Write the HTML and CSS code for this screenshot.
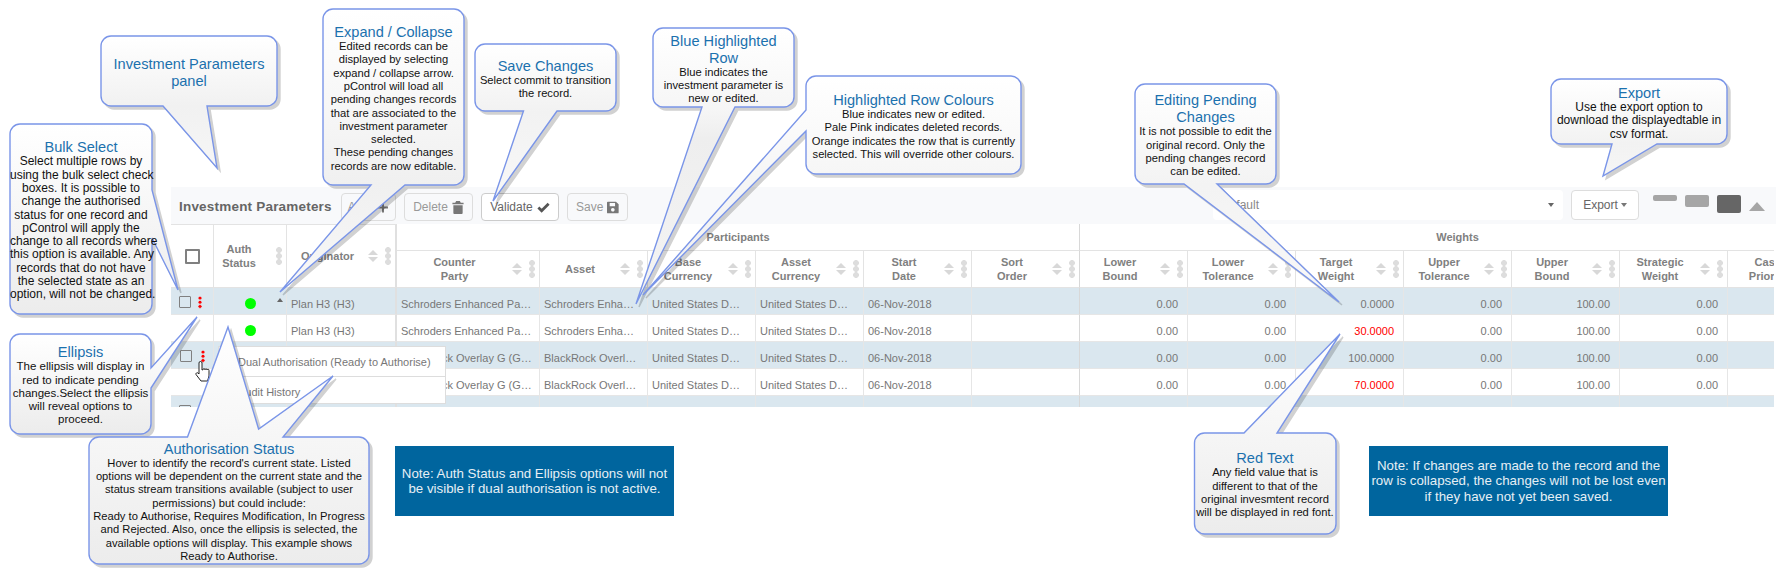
FILE: index.html
```html
<!DOCTYPE html>
<html>
<head>
    <meta charset="UTF-8">
    <title>Investment Parameters</title>
    <link rel="stylesheet" href="styles.css">
</head>
<body>
<div class="stage">

    <!-- the panel from the app -->
    <div class="panel">
        <div class="toolbar">
            <span class="panel-title">Investment Parameters</span>
            <button class="btn btn-off btn-add" type="button">Add <svg class="ico" viewBox="0 0 12 12"><path d="M5 1h2v4h4v2H7v4H5V7H1V5h4z"/></svg></button>
            <button class="btn btn-off" type="button">Delete <svg class="ico" viewBox="0 0 12 14"><path d="M4 0h4l1 2h3v1.500H0V2h3zM1 4.500h10V13a1 1 0 0 1-1 1H2a1 1 0 0 1-1-1z"/></svg></button>
            <button class="btn" type="button">Validate <svg class="ico ico-wide" viewBox="0 0 14 12"><path d="M1.500 6l3.500 3.500 7.500-7.500" fill="none" stroke="#555" stroke-width="3"/></svg></button>
            <button class="btn btn-off" type="button">Save <svg class="ico" viewBox="0 0 13 13"><path fill-rule="evenodd" d="M1 0h9l3 3v9a1 1 0 0 1-1 1H1a1 1 0 0 1-1-1V1a1 1 0 0 1 1-1zM3 1.500V5h6V1.500zM6.500 7a2 2 0 1 0 .01 0z"/></svg></button>
            <div class="view-select"><span>Default</span><i class="caret"></i></div>
            <button class="btn btn-export" type="button">Export <i class="caret caret-small"></i></button>
            <div class="density">
                <i class="den den-s"></i>
                <i class="den den-m"></i>
                <i class="den den-l"></i>
                <i class="collapse-arrow"></i>
            </div>
        </div>

        <div class="table-wrap">
            <table class="grid">
                <colgroup>
                    <col class="col-chk"><col class="col-auth"><col class="col-orig"><col class="col-party">
                    <col class="col-std"><col class="col-std"><col class="col-std"><col class="col-std"><col class="col-std">
                    <col class="col-std"><col class="col-std"><col class="col-std"><col class="col-std"><col class="col-std"><col class="col-std"><col class="col-std">
                </colgroup>
                <thead>
                    <tr class="group-row">
                        <th rowspan="2" class="frozen"><i class="check check-big"></i></th>
                        <th rowspan="2" class="frozen"><div class="th"><span class="th-label th-label-auth">Auth<br>Status</span><i class="dots"></i></div></th>
                        <th rowspan="2" class="frozen frozen-end"><div class="th"><span class="th-label">Originator</span><i class="sort"></i><i class="dots"></i></div></th>
                        <th colspan="6" class="group">Participants</th>
                        <th colspan="7" class="group">Weights</th>
                    </tr>
                    <tr class="head-row">
                        <th><div class="th"><span class="th-label">Counter<br>Party</span><i class="sort"></i><i class="dots"></i></div></th>
                        <th><div class="th"><span class="th-label">Asset</span><i class="sort"></i><i class="dots"></i></div></th>
                        <th><div class="th"><span class="th-label">Base<br>Currency</span><i class="sort"></i><i class="dots"></i></div></th>
                        <th><div class="th"><span class="th-label">Asset<br>Currency</span><i class="sort"></i><i class="dots"></i></div></th>
                        <th><div class="th"><span class="th-label">Start<br>Date</span><i class="sort"></i><i class="dots"></i></div></th>
                        <th class="group-end"><div class="th"><span class="th-label">Sort<br>Order</span><i class="sort"></i><i class="dots"></i></div></th>
                        <th><div class="th"><span class="th-label">Lower<br>Bound</span><i class="sort"></i><i class="dots"></i></div></th>
                        <th><div class="th"><span class="th-label">Lower<br>Tolerance</span><i class="sort"></i><i class="dots"></i></div></th>
                        <th><div class="th"><span class="th-label">Target<br>Weight</span><i class="sort"></i><i class="dots"></i></div></th>
                        <th><div class="th"><span class="th-label">Upper<br>Tolerance</span><i class="sort"></i><i class="dots"></i></div></th>
                        <th><div class="th"><span class="th-label">Upper<br>Bound</span><i class="sort"></i><i class="dots"></i></div></th>
                        <th><div class="th"><span class="th-label">Strategic<br>Weight</span><i class="sort"></i><i class="dots"></i></div></th>
                        <th><div class="th"><span class="th-label">Cash<br>Priority</span><i class="sort"></i><i class="dots"></i></div></th>
                    </tr>
                </thead>
                <tbody>
                    <tr class="blue">
                        <td><div class="row-tools"><i class="check"></i><i class="kebab"></i></div></td>
                        <td class="auth"><i class="status"></i><i class="row-arrow"></i></td>
                        <td class="frozen-end">Plan H3 (H3)</td>
                        <td>Schroders Enhanced Participation</td>
                        <td class="tight">Schroders Enhanced Participation</td>
                        <td class="tight">United States Dollar (USD)</td>
                        <td class="tight">United States Dollar (USD)</td>
                        <td>06-Nov-2018</td>
                        <td class="group-end"></td>
                        <td class="num">0.00</td><td class="num">0.00</td><td class="num">0.0000</td><td class="num">0.00</td><td class="num">100.00</td><td class="num">0.00</td><td></td>
                    </tr>
                    <tr>
                        <td></td>
                        <td class="auth"><i class="status"></i></td>
                        <td class="frozen-end">Plan H3 (H3)</td>
                        <td>Schroders Enhanced Participation</td>
                        <td class="tight">Schroders Enhanced Participation</td>
                        <td class="tight">United States Dollar (USD)</td>
                        <td class="tight">United States Dollar (USD)</td>
                        <td>06-Nov-2018</td>
                        <td class="group-end"></td>
                        <td class="num">0.00</td><td class="num">0.00</td><td class="num changed">30.0000</td><td class="num">0.00</td><td class="num">100.00</td><td class="num">0.00</td><td></td>
                    </tr>
                    <tr class="blue">
                        <td><div class="row-tools row-tools-hover"><i class="check"></i><i class="kebab"></i></div></td>
                        <td class="auth"></td>
                        <td class="frozen-end"></td>
                        <td>BlackRock Overlay G (GBP Hedged)</td>
                        <td>BlackRock Overlay G (GBP Hedged)</td>
                        <td class="tight">United States Dollar (USD)</td>
                        <td class="tight">United States Dollar (USD)</td>
                        <td>06-Nov-2018</td>
                        <td class="group-end"></td>
                        <td class="num">0.00</td><td class="num">0.00</td><td class="num">100.0000</td><td class="num">0.00</td><td class="num">100.00</td><td class="num">0.00</td><td></td>
                    </tr>
                    <tr>
                        <td></td>
                        <td class="auth"></td>
                        <td class="frozen-end"></td>
                        <td>BlackRock Overlay G (GBP Hedged)</td>
                        <td>BlackRock Overlay G (GBP Hedged)</td>
                        <td class="tight">United States Dollar (USD)</td>
                        <td class="tight">United States Dollar (USD)</td>
                        <td>06-Nov-2018</td>
                        <td class="group-end"></td>
                        <td class="num">0.00</td><td class="num">0.00</td><td class="num changed">70.0000</td><td class="num">0.00</td><td class="num">100.00</td><td class="num">0.00</td><td></td>
                    </tr>
                    <tr class="blue">
                        <td><div class="row-tools"><i class="check"></i></div></td>
                        <td></td><td class="frozen-end"></td><td></td><td></td><td></td><td></td><td></td><td class="group-end"></td>
                        <td></td><td></td><td></td><td></td><td></td><td></td><td></td>
                    </tr>
                </tbody>
            </table>
        </div>
    </div>

    <!-- ellipsis menu + pointer -->
    <div class="menu">
        <div class="menu-item">Dual Authorisation (Ready to Authorise)</div>
        <div class="menu-item">Audit History</div>
    </div>
    <svg class="hand" viewBox="0 0 18 22"><path d="M4 2a1.500 1.500 0 0 1 3 0v7l1-.3a1 1 0 0 1 2 0 1 1 0 0 1 2 .3 1 1 0 0 1 2 .5V15l-1.500 5H6L1 13.500a1.300 1.300 0 0 1 2-1.500L4 13Z" fill="#fff" stroke="#222" stroke-width="1"/></svg>

    <!-- callout shapes, drawn over the table -->
    <svg class="shapes" viewBox="0 0 1786 578">
        <defs>
            <linearGradient id="gPanel" gradientUnits="userSpaceOnUse" x1="0" y1="36" x2="0" y2="168"><stop offset="0" stop-color="#fff"/><stop offset=".53" stop-color="#f1f1f1"/><stop offset="1" stop-color="#f6f6f6"/></linearGradient>
            <linearGradient id="gBulk" gradientUnits="userSpaceOnUse" x1="0" y1="124" x2="0" y2="314"><stop offset="0" stop-color="#fff"/><stop offset="1" stop-color="#ececec"/></linearGradient>
            <linearGradient id="gExpand" gradientUnits="userSpaceOnUse" x1="0" y1="9" x2="0" y2="292"><stop offset="0" stop-color="#fff"/><stop offset=".62" stop-color="#f0f0f0"/><stop offset="1" stop-color="#f8f8f8"/></linearGradient>
            <linearGradient id="gSave" gradientUnits="userSpaceOnUse" x1="0" y1="44" x2="0" y2="202"><stop offset="0" stop-color="#fff"/><stop offset=".43" stop-color="#f2f2f2"/><stop offset="1" stop-color="#f8f8f8"/></linearGradient>
            <linearGradient id="gBlue" gradientUnits="userSpaceOnUse" x1="0" y1="28" x2="0" y2="304"><stop offset="0" stop-color="#fff"/><stop offset=".29" stop-color="#f6f6f6"/><stop offset=".4" stop-color="#eee"/><stop offset="1" stop-color="#f4f4f4"/></linearGradient>
            <linearGradient id="gColours" gradientUnits="userSpaceOnUse" x1="0" y1="76" x2="0" y2="295"><stop offset="0" stop-color="#fff"/><stop offset=".45" stop-color="#f6f6f6"/><stop offset="1" stop-color="#f0f0f0"/></linearGradient>
            <linearGradient id="gEdit" gradientUnits="userSpaceOnUse" x1="0" y1="84" x2="0" y2="302"><stop offset="0" stop-color="#fff"/><stop offset=".46" stop-color="#f3f3f3"/><stop offset="1" stop-color="#f8f8f8"/></linearGradient>
            <linearGradient id="gExport" gradientUnits="userSpaceOnUse" x1="0" y1="79" x2="0" y2="176"><stop offset="0" stop-color="#fff"/><stop offset=".67" stop-color="#f2f2f2"/><stop offset="1" stop-color="#f6f6f6"/></linearGradient>
            <linearGradient id="gEllipsis" gradientUnits="userSpaceOnUse" x1="0" y1="334" x2="0" y2="434"><stop offset="0" stop-color="#fff"/><stop offset="1" stop-color="#ececec"/></linearGradient>
            <linearGradient id="gAuth" gradientUnits="userSpaceOnUse" x1="0" y1="327" x2="0" y2="564"><stop offset="0" stop-color="#fff"/><stop offset="1" stop-color="#ececec"/></linearGradient>
            <linearGradient id="gRed" gradientUnits="userSpaceOnUse" x1="0" y1="334" x2="0" y2="534"><stop offset="0" stop-color="#fff"/><stop offset="1" stop-color="#ececec"/></linearGradient>
        </defs>
        <path class="bubble" fill="url(#gPanel)" d="M111 36H267A10 10 0 0 1 277 46V96A10 10 0 0 1 267 106H207L217 168L163 106H111A10 10 0 0 1 101 96V46A10 10 0 0 1 111 36Z"/>
        <path class="bubble" fill="url(#gBulk)" d="M20 124H142A10 10 0 0 1 152 134V190L178 290L152 238V304A10 10 0 0 1 142 314H20A10 10 0 0 1 10 304V134A10 10 0 0 1 20 124Z"/>
        <path class="bubble" fill="url(#gExpand)" d="M333 9H454A10 10 0 0 1 464 19V175A10 10 0 0 1 454 185H405L280 292L371 185H333A10 10 0 0 1 323 175V19A10 10 0 0 1 333 9Z"/>
        <path class="bubble" fill="url(#gSave)" d="M485 44H606A10 10 0 0 1 616 54V101A10 10 0 0 1 606 111H557L493 201L523.500 111H485A10 10 0 0 1 475 101V54A10 10 0 0 1 485 44Z"/>
        <path class="bubble" fill="url(#gBlue)" d="M663 28H784A10 10 0 0 1 794 38V97A10 10 0 0 1 784 107H735L636 304L702 107H663A10 10 0 0 1 653 97V38A10 10 0 0 1 663 28Z"/>
        <path class="bubble" fill="url(#gColours)" d="M816 76H1011A10 10 0 0 1 1021 86V164A10 10 0 0 1 1011 174H816A10 10 0 0 1 806 164V131L643 295L806 110V86A10 10 0 0 1 816 76Z"/>
        <path class="bubble" fill="url(#gEdit)" d="M1145 84H1266A10 10 0 0 1 1276 94V174A10 10 0 0 1 1266 184H1217L1339 302L1184 184H1145A10 10 0 0 1 1135 174V94A10 10 0 0 1 1145 84Z"/>
        <path class="bubble" fill="url(#gExport)" d="M1561 79H1717A10 10 0 0 1 1727 89V134A10 10 0 0 1 1717 144H1657L1603 176L1612 144H1561A10 10 0 0 1 1551 134V89A10 10 0 0 1 1561 79Z"/>
        <path class="bubble" fill="url(#gEllipsis)" d="M20 334H141A10 10 0 0 1 151 344V368L197 317L151 388V424A10 10 0 0 1 141 434H20A10 10 0 0 1 10 424V344A10 10 0 0 1 20 334Z"/>
        <path class="bubble" fill="url(#gAuth)" d="M99 437H187.500L228 327L258.600 429L333 376L283 437H359A10 10 0 0 1 369 447V554A10 10 0 0 1 359 564H99A10 10 0 0 1 89 554V447A10 10 0 0 1 99 437Z"/>
        <path class="bubble" fill="url(#gRed)" d="M1204.500 433H1244L1340 334L1277 433H1326A10 10 0 0 1 1336 443V524A10 10 0 0 1 1326 534H1204.500A10 10 0 0 1 1194.500 524V443A10 10 0 0 1 1204.500 433Z"/>
    </svg>

    <!-- callout text -->
    <div class="note c-panel"><h3>Investment Parameters<br>panel</h3></div>
    <div class="note c-bulk"><h3>Bulk Select</h3><p>Select multiple rows by<br>using the bulk select check<br>boxes. It is possible to<br>change the authorised<br>status for one record and<br>pControl will apply the<br>change to all records where<br>this option is available. Any<br>records that do not have<br>the selected state as an<br>option, will not be changed.</p></div>
    <div class="note c-expand"><h3>Expand / Collapse</h3><p>Edited records can be<br>displayed by selecting<br>expand / collapse arrow.<br>pControl will load all<br>pending changes records<br>that are associated to the<br>investment parameter<br>selected.<br>These pending changes<br>records are now editable.</p></div>
    <div class="note c-save"><h3>Save Changes</h3><p>Select commit to transition<br>the record.</p></div>
    <div class="note c-blue"><h3>Blue Highlighted<br>Row</h3><p>Blue indicates the<br>investment parameter is<br>new or edited.</p></div>
    <div class="note c-colours"><h3>Highlighted Row Colours</h3><p>Blue indicates new or edited.<br>Pale Pink indicates deleted records.<br>Orange indicates the row that is currently<br>selected. This will override other colours.</p></div>
    <div class="note c-edit"><h3>Editing Pending<br>Changes</h3><p>It is not possible to edit the<br>original record. Only the<br>pending changes record<br>can be edited.</p></div>
    <div class="note c-export"><h3>Export</h3><p>Use the export option to<br>download the displayedtable in<br>csv format.</p></div>
    <div class="note c-ellipsis"><h3>Ellipsis</h3><p>The ellipsis will display in<br>red to indicate pending<br>changes.Select the ellipsis<br>will reveal options to<br>proceed.</p></div>
    <div class="note c-auth"><h3>Authorisation Status</h3><p>Hover to identify the record's current state. Listed<br>options will be dependent on the current state and the<br>status stream transitions available (subject to user<br>permissions) but could include:<br>Ready to Authorise, Requires Modification, In Progress<br>and Rejected. Also, once the ellipsis is selected, the<br>available options will display. This example shows<br>Ready to Authorise.</p></div>
    <div class="note c-red"><h3>Red Text</h3><p>Any field value that is<br>different to that of the<br>original invesmtent record<br>will be displayed in red font.</p></div>

    <div class="banner banner-auth">Note: Auth Status and Ellipsis options will not<br>be visible if dual authorisation is not active.</div>
    <div class="banner banner-save">Note: If changes are made to the record and the<br>row is collapsed, the changes will not be lost even<br>if they have not yet been saved.</div>
</div>
</body>
</html>
```

FILE: styles.css
```css
* {
    box-sizing: border-box;
}

body {
    margin: 0;
    background-color: #fff;
    font-family: "Liberation Sans", Arial, sans-serif;
}

.stage {
    position: relative;
    width: 1786px;
    height: 578px;
    overflow: hidden;
    padding: 187px 10px 0 171px;
}

/* toolbar */
.toolbar {
    display: flex;
    align-items: center;
    height: 37px;
    padding: 0 11px 0 8px;
    background-color: #f8f9fb;
}

.panel-title {
    width: 154px;
    font-size: 13.5px;
    font-weight: bold;
    color: #666;
    letter-spacing: .2px;
    margin-right: 8px;
    white-space: nowrap;
    position: relative;
    top: 1px;
}

.btn {
    display: flex;
    align-items: center;
    justify-content: center;
    gap: 4px;
    height: 28px;
    margin: 3px 8px 0 0;
    padding: 0 8px;
    background-color: #fff;
    border: 1px solid #ccc;
    border-radius: 4px;
    color: #666;
    font-family: "Liberation Sans", Arial, sans-serif;
    font-size: 12px;
}

.btn-off {
    background-color: transparent;
    border-color: #ddd;
    color: #999;
}

.btn-add { gap: 8px; padding: 0; }
.btn-off:nth-of-type(1) { width: 55px; }
.btn-off:nth-of-type(2) { width: 69px; }
.btn:nth-of-type(3) { width: 78px; }
.btn-off:nth-of-type(4) { width: 61px; }

.ico {
    width: 12px;
    height: 13px;
    fill: #777;
}

.ico-wide {
    width: 13px;
}

.view-select {
    display: flex;
    align-items: center;
    justify-content: space-between;
    width: 350px;
    height: 30px;
    margin: -2px 8px 0 auto;
    padding: 0 9px 0 8px;
    background-color: #fff;
    border-radius: 4px;
    font-size: 12px;
    color: #888;
}

.caret {
    width: 0;
    height: 0;
    border-left: 3.5px solid transparent;
    border-right: 3.5px solid transparent;
    border-top: 4px solid #666;
}

.caret-small {
    border-top-color: #777;
}

.btn-export {
    width: 68px;
    height: 30px;
    margin: -2px 14px 0 0;
    padding: 0;
    gap: 3px;
    border-color: #ddd;
}

.density {
    display: flex;
    align-items: flex-start;
    align-self: flex-start;
    gap: 8px;
    margin-top: 8px;
}

.den {
    width: 24px;
    border-radius: 2px;
    background-color: #a6a6a6;
}

.den-s { height: 6px; }
.den-m { height: 12px; }
.den-l { height: 18px; background-color: #666; }

.collapse-arrow {
    width: 0;
    height: 0;
    margin-top: 7px;
    border-left: 8.5px solid transparent;
    border-right: 8.5px solid transparent;
    border-bottom: 9px solid #a6a6a6;
}

/* table */
.table-wrap {
    width: 1603px;
    height: 183px;
    overflow: hidden;
}

.grid {
    width: 1665px;
    table-layout: fixed;
    border-collapse: separate;
    border-spacing: 0;
    font-size: 11px;
    color: #777;
}

.col-chk { width: 43px; }
.col-auth { width: 73px; }
.col-orig { width: 110px; }
.col-party { width: 143px; }
.col-std { width: 108px; }

.grid th {
    padding: 0;
    border-right: 1px solid #e3e3e3;
    border-bottom: 1px solid #e3e3e3;
    font-size: 11px;
    font-weight: bold;
    line-height: 14px;
    color: #808080;
}

.group-row { height: 27px; }
.head-row { height: 37px; }

.grid th.frozen {
    border-top: 1px solid #e3e3e3;
}

.grid th.frozen-end,
.grid td.frozen-end {
    border-right: 2px solid #e0e0e0;
}

.grid th.group {
    border-bottom: 1px solid #e3e3e3;
    border-right: 1px solid #d8d8d8;
}

.grid th.group-end,
.grid td.group-end {
    border-right-color: #d8d8d8;
}

.th {
    display: flex;
    align-items: center;
    height: 100%;
    padding-right: 4px;
}

.th-label {
    flex: 1;
    min-width: 0;
    text-align: center;
}

.th-label-auth {
    padding-right: 12px;
}

.sort {
    position: relative;
    display: block;
    flex: none;
    width: 10px;
    height: 12px;
    margin-right: 7px;
}

.sort::before,
.sort::after {
    content: "";
    position: absolute;
    left: 0;
    border-left: 5px solid transparent;
    border-right: 5px solid transparent;
}

.sort::before {
    top: 0;
    border-bottom: 5.5px solid #d8d8d8;
}

.sort::after {
    bottom: 0;
    border-top: 5.5px solid #d8d8d8;
}

.dots {
    display: block;
    flex: none;
    width: 6px;
    height: 18px;
    background: radial-gradient(circle, #ddd 2.7px, transparent 3.1px) 0 0 / 6px 6px;
}

.grid td {
    height: 27px;
    padding: 5px 5px 0 4px;
    border-right: 1px solid #e6e6e6;
    border-bottom: 1px solid #e6e6e6;
    overflow: hidden;
    white-space: nowrap;
    text-overflow: ellipsis;
}

.grid .tight {
    padding-right: 10px;
}

.blue td {
    background-color: #dae7ef;
}

.grid .num {
    text-align: right;
    padding-right: 9px;
}

.grid .changed {
    color: #f00;
}

.check {
    display: block;
    width: 12px;
    height: 12px;
    border: 1.5px solid #808080;
    border-radius: 1px;
    background-color: transparent;
}

.check-big {
    width: 15px;
    height: 15px;
    margin: 0 auto;
    border-width: 2px;
}

.row-tools {
    display: flex;
    gap: 7px;
    margin: -2px 0 0 4px;
}

.row-tools-hover {
    gap: 9px;
    margin-left: 5px;
}

.kebab {
    display: block;
    width: 4px;
    height: 12.600px;
    background: radial-gradient(circle, #f00 1.4px, transparent 1.8px) 0 0 / 4px 4.200px;
}

.grid .auth {
    position: relative;
    padding: 5px 4px 0;
}

.status {
    display: block;
    width: 11px;
    height: 11px;
    margin: 0 auto;
    border-radius: 50%;
    background-color: #0f0;
}

.row-arrow {
    position: absolute;
    top: 10px;
    left: 63px;
    border-left: 3.500px solid transparent;
    border-right: 3.500px solid transparent;
    border-bottom: 4px solid #666;
}

/* ellipsis menu */
.menu {
    position: absolute;
    left: 218px;
    top: 346px;
    width: 228px;
    height: 58px;
    background-color: #fff;
    border: 1px solid #ddd;
    font-size: 11px;
    color: #777;
}

.menu-item {
    height: 29px;
    padding: 9px 0 0 19px;
}

.menu-item + .menu-item {
    border-top: 1px solid #ddd;
}

.hand {
    position: absolute;
    left: 195px;
    top: 361px;
    width: 18px;
    height: 22px;
}

/* callouts */
.shapes {
    position: absolute;
    left: 0;
    top: 0;
    width: 1786px;
    height: 578px;
}

.bubble {
    stroke: #7a95e8;
    stroke-width: 1.400;
    stroke-linejoin: miter;
    filter: drop-shadow(3px 3px 0 rgba(0, 0, 0, .18));
}

.note {
    position: absolute;
    display: flex;
    flex-direction: column;
    justify-content: center;
    padding-top: 3px;
    text-align: center;
    white-space: nowrap;
    color: #111;
}

.note h3 {
    margin: 0 0 -1px;
    font-size: 14.600px;
    font-weight: normal;
    line-height: 17px;
    color: #1b71ae;
}

.note p {
    margin: 0;
    font-size: 11.200px;
    line-height: 13.300px;
}

.c-panel { left: 101px; top: 36px; width: 176px; height: 70px; }
.c-bulk { left: 10px; top: 124px; width: 142px; height: 190px; }
.c-expand { left: 323px; top: 9px; width: 141px; height: 176px; }
.c-save { left: 475px; top: 44px; width: 141px; height: 67px; }
.c-blue { left: 653px; top: 28px; width: 141px; height: 79px; }
.c-colours { left: 806px; top: 76px; width: 215px; height: 98px; }
.c-edit { left: 1135px; top: 84px; width: 141px; height: 100px; }
.c-export { left: 1551px; top: 79px; width: 176px; height: 65px; }
.c-ellipsis { left: 10px; top: 334px; width: 141px; height: 100px; }
.c-auth { left: 89px; top: 437px; width: 280px; height: 127px; }
.c-red { left: 1194px; top: 433px; width: 142px; height: 101px; }

/* these three were typed a little larger in the original */
.c-bulk p,
.c-export p { font-size: 12px; }
.c-ellipsis p { font-size: 11.500px; }

.banner {
    position: absolute;
    top: 446px;
    height: 70px;
    display: flex;
    align-items: center;
    justify-content: center;
    text-align: center;
    background-color: #00659e;
    color: #e6eff5;
    font-size: 13.300px;
    line-height: 15.300px;
    white-space: nowrap;
}

.banner-auth { left: 395px; width: 279px; }
.banner-save { left: 1369px; width: 299px; }
```
